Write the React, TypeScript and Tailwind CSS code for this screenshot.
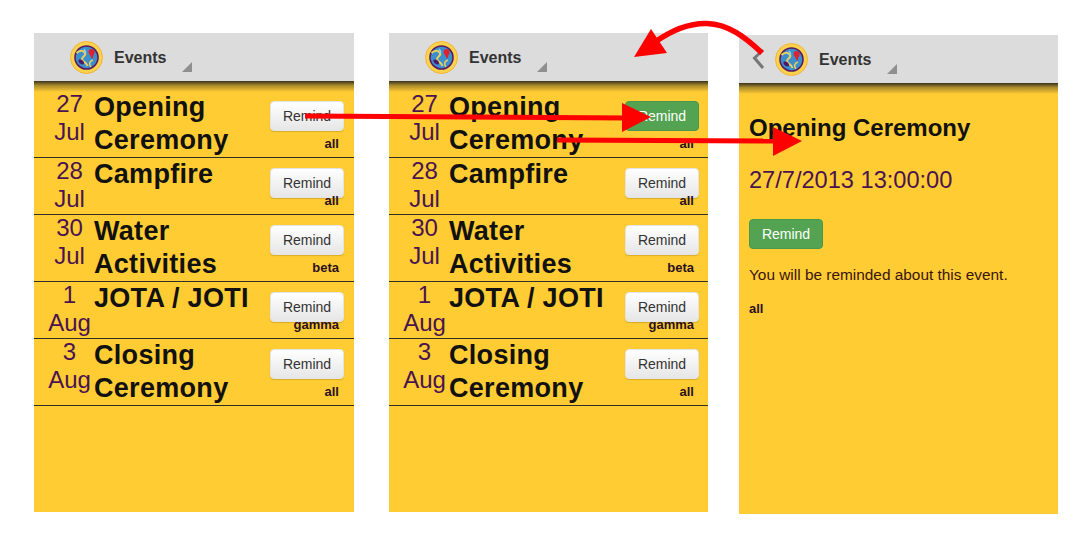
import React from "react";

const events = [
  { d: "27", m: "Jul", t: "Opening Ceremony", g: "all" },
  { d: "28", m: "Jul", t: "Campfire", g: "all" },
  { d: "30", m: "Jul", t: "Water Activities", g: "beta" },
  { d: "1", m: "Aug", t: "JOTA / JOTI", g: "gamma" },
  { d: "3", m: "Aug", t: "Closing Ceremony", g: "all" },
];

function Logo() {
  return (
    <svg width="33" height="33" viewBox="0 0 33 33" className="shrink-0">
      <circle cx="16.5" cy="16.5" r="16" fill="#fbd24a" stroke="#f2b33c" strokeWidth="1" />
      <circle cx="16.5" cy="16.5" r="11.5" fill="#3c8fcb" stroke="#5a1a62" strokeWidth="1.6" />
      <path d="M6.5 12c3-3 7-3 8.500 0s-3 3.500-3 6 4 2.500 5.500 7" fill="none" stroke="#e9cf62" strokeWidth="2" />
      <path d="M21 26c-2.500-3-1.500-6 2-7" fill="none" stroke="#e9cf62" strokeWidth="1.500" />
      <path d="M14 8c1 1 2 2 1.500 4" fill="none" stroke="#8fd0e8" strokeWidth="1.500" />
      <path d="M19 9c2-2 5-1 5.500 1.500s-1.500 3-2 7.500c-1.500-1-1.500-3-2.500-4s-2-3-1-5z" fill="#e0202c" />
      <path d="M8.500 19c2-1 4 0 5 1.500s.5 3.500-1.500 3-4-2.500-3.500-4.500z" fill="#4a1a6a" />
    </svg>
  );
}

function Header({ back }: { back?: boolean }) {
  return (
    <div className="relative flex h-[48px] shrink-0 items-center bg-[#dcdcdc] pl-[36px]">
      {back && (
        <svg width="16" height="24" viewBox="0 0 16 24" className="absolute left-[12px] top-[13px]">
          <path d="M12 2 L3.500 10 L12 20" fill="none" stroke="#777" strokeWidth="3" />
        </svg>
      )}
      <Logo />
      <span className="ml-[11px] mt-[2px] text-[16px] font-bold text-[#333]">Events</span>
      <svg width="10" height="10" viewBox="0 0 10 10" className="ml-[16px] mt-[20px]">
        <path d="M10 0V10H0Z" fill="#8f8f8f" />
      </svg>
    </div>
  );
}

function Panel({ children, back, w }: { children: React.ReactNode; back?: boolean; w: string }) {
  return (
    <div className={`flex h-[479px] shrink-0 flex-col bg-[#ffcc33] ${w}`}>
      <Header back={back} />
      <div className="-mb-[11px] h-[11px] shrink-0 bg-gradient-to-b from-[#3c3219] via-[#a98a2b] via-40% to-[#ffcc33]" />
      {children}
    </div>
  );
}

function Btn({ green }: { green?: boolean }) {
  return (
    <button
      className={
        green
          ? "h-[30px] w-[74px] rounded border border-[#4a994a] bg-[#53a352] text-[14px] text-white"
          : "h-[30px] w-[74px] rounded border border-[#e4e4e4] bg-gradient-to-b from-white to-[#e6e6e6] text-[14px] text-[#333] shadow-[0_1px_1px_rgba(0,0,0,0.15)]"
      }
    >
      Remind
    </button>
  );
}

function List({ activeFirst, pr }: { activeFirst?: boolean; pr: string }) {
  return (
    <div className="relative pt-[10px]">
      {events.map((e, i) => (
        <div key={e.t} className={`flex border-b border-[#33302a] ${pr}`}>
          <div className="-mt-[1px] ml-[13px] w-[45px] shrink-0 pb-[1px] text-center text-[24px] leading-[28px] text-[#4a1450]">
            <div>{e.d}</div>
            <div>{e.m}</div>
          </div>
          <div className="ml-[2px] min-w-0 flex-1 pr-[20px] text-[27px] font-bold leading-[33px] tracking-[0.3px] text-[#111]">
            {e.t}
          </div>
          <div className="grid w-[74px] shrink-0">
            <div className="col-start-1 row-start-1 self-start pt-[10px]">
              <Btn green={activeFirst && i === 0} />
            </div>
            <div className="col-start-1 row-start-1 self-end pb-[5px] pr-[5px] text-right text-[13px] font-bold leading-[16px] text-[#2a1020]">
              {e.g}
            </div>
          </div>
        </div>
      ))}
    </div>
  );
}

export default function App() {
  return (
    <div className="relative h-[542px] w-[1089px] overflow-hidden bg-white font-['Liberation_Sans',Arial,sans-serif]">
      <div className="flex items-start pl-[34px] pt-[33px]">
        <Panel w="w-[320px]">
          <List pr="pr-[10px]" />
        </Panel>
        <div className="ml-[35px]">
          <Panel w="w-[319px]">
            <List activeFirst pr="pr-[9px]" />
          </Panel>
        </div>
        <div className="ml-[31px] mt-[2px]">
          <Panel w="w-[319px]" back>
            <div className="px-[10px] pt-[32px]">
              <h1 className="text-[24px] font-bold leading-[26px] text-[#111]">Opening Ceremony</h1>
              <div className="mt-[25px] text-[23.6px] leading-[28px] text-[#4a1450]">27/7/2013 13:00:00</div>
              <div className="mt-[25px]">
                <Btn green />
              </div>
              <p className="mt-[15px] text-[15.4px] leading-[22px] text-[#3a1410]">You will be reminded about this event.</p>
              <div className="mt-[15px] text-[13px] font-bold leading-[16px] text-[#2a1020]">all</div>
            </div>
          </Panel>
        </div>
      </div>
      <svg width="1089" height="542" viewBox="0 0 1089 542" className="pointer-events-none absolute left-0 top-0">
        <path d="M305 116 L630 118" stroke="#ff0000" strokeWidth="5" fill="none" />
        <path d="M622 103 L651 117 L622 132Z" fill="#ff0000" />
        <path d="M557 140 L780 141" stroke="#ff0000" strokeWidth="5" fill="none" />
        <path d="M773 127 L802 141 L773 156Z" fill="#ff0000" />
        <path d="M762 53 C745 37 728 24 707 23.500 C690 23 672 30 655 42" stroke="#ff0000" strokeWidth="5.500" fill="none" />
        <path d="M651 29 L634 57 L667 53Z" fill="#ff0000" />
      </svg>
    </div>
  );
}
